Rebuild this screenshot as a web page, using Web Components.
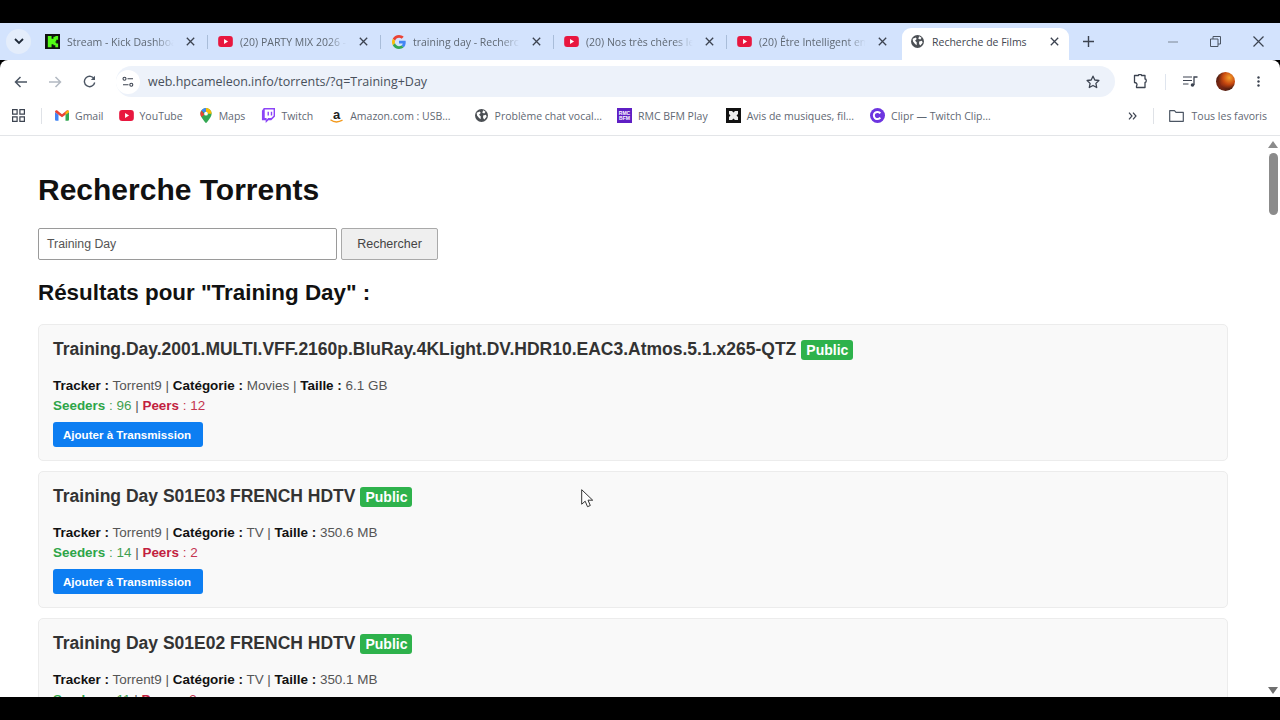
<!DOCTYPE html>
<html lang="fr">
<head>
<meta charset="utf-8">
<title>Recherche de Films</title>
<style>
  html, body { margin: 0; padding: 0; background: #000; overflow: hidden; }
  body { width: 1280px; height: 720px; display: flex; flex-direction: column; }
</style>
</head>
<body>
<browser-window>
  <tab-strip>
    <browser-tab icon="kick" fade>Stream - Kick Dashboard</browser-tab>
    <browser-tab icon="yt" fade>(20) PARTY MIX 2026 - Musique</browser-tab>
    <browser-tab icon="google" fade>training day - Recherche</browser-tab>
    <browser-tab icon="yt" fade>(20) Nos très chères lectures</browser-tab>
    <browser-tab icon="yt" fade>(20) Être Intelligent en</browser-tab>
    <browser-tab icon="globe" active>Recherche de Films</browser-tab>
  </tab-strip>
  <nav-bar url="web.hpcameleon.info/torrents/?q=Training+Day"></nav-bar>
  <bookmark-bar>
    <bookmark-item icon="gmail">Gmail</bookmark-item>
    <bookmark-item icon="yt">YouTube</bookmark-item>
    <bookmark-item icon="maps" style="margin-left:1px">Maps</bookmark-item>
    <bookmark-item icon="twitch" style="margin-left:1px">Twitch</bookmark-item>
    <bookmark-item icon="amazon" style="margin-left:1px">Amazon.com : USB...</bookmark-item>
    <bookmark-item icon="globe" style="margin-left:9px">Problème chat vocal...</bookmark-item>
    <bookmark-item icon="rmc">RMC BFM Play</bookmark-item>
    <bookmark-item icon="avis" style="margin-left:3px">Avis de musiques, fil...</bookmark-item>
    <bookmark-item icon="clipr" style="margin-left:1px">Clipr — Twitch Clip...</bookmark-item>
  </bookmark-bar>
  <torrent-page query="Training Day">
    <torrent-card name="Training.Day.2001.MULTI.VFF.2160p.BluRay.4KLight.DV.HDR10.EAC3.Atmos.5.1.x265-QTZ" category="Movies" size="6.1 GB" seeders="96" peers="12"></torrent-card>
    <torrent-card name="Training Day S01E03 FRENCH HDTV" category="TV" size="350.6 MB" seeders="14" peers="2"></torrent-card>
    <torrent-card name="Training Day S01E02 FRENCH HDTV" category="TV" size="350.1 MB" seeders="11" peers="3"></torrent-card>
  </torrent-page>
</browser-window>

<script>
const ICONS = {
  kick: `<svg viewBox="0 0 16 16" width="15" height="15"><rect width="16" height="16" fill="#111"/><path d="M3 2h4v3h2V3h2V2h3v4h-2v2h-1v1h1v1h2v4h-3v-2H9v-1H7v3H3z" fill="#53fc18"/></svg>`,
  yt: `<svg viewBox="0 0 16 12" width="15" height="11"><rect width="16" height="12" rx="3.2" fill="#e8173f"/><path d="M6.4 3.4 10.8 6 6.4 8.6z" fill="#fff"/></svg>`,
  google: `<svg viewBox="0 0 48 48" width="14" height="14"><path fill="#ea4335" d="M24 9.500c3.500 0 6.700 1.200 9.200 3.600l6.900-6.900C35.900 2.400 30.400 0 24 0 14.600 0 6.500 5.400 2.600 13.200l8 6.200C12.500 13.600 17.800 9.500 24 9.500z"/><path fill="#4285f4" d="M47 24.500c0-1.600-.1-3.100-.4-4.500H24v9h12.900c-.6 3-2.200 5.500-4.700 7.200l7.700 6C44.400 38 47 31.800 47 24.500z"/><path fill="#fbbc05" d="M10.600 28.600c-.5-1.400-.8-3-.8-4.600s.3-3.200.8-4.600l-8-6.200C.9 16.500 0 20.100 0 24s.9 7.500 2.600 10.800z"/><path fill="#34a853" d="M24 48c6.500 0 11.900-2.100 15.900-5.800l-7.700-6c-2.200 1.500-4.900 2.300-8.200 2.300-6.200 0-11.500-4.200-13.400-9.800l-8 6.200C6.500 42.600 14.600 48 24 48z"/></svg>`,
  globe: `<svg viewBox="0 0 16 16" width="13" height="13"><circle cx="8" cy="8" r="8" fill="#4b4f54"/><path d="M2 4.500 6 3l1 2-2 2 2 2v3.500L5 11 2.500 8zM10 1.500l3 2-1.500 2L9 4.500zM10 8l3.500-1 .8 2.500-2.800 3.500L10 11z" fill="#fff"/></svg>`,
  gmail: `<svg viewBox="0 0 16 12" width="14" height="11"><path d="M0 2v8.500C0 11.300.7 12 1.500 12H4V5z" fill="#4285f4"/><path d="M12 5v7h2.500c.8 0 1.500-.7 1.500-1.500V2z" fill="#34a853"/><path d="M0 2c0-2 2-2.500 3-1.500L8 4.500 13 .5c1-1 3-.5 3 1.500l-4 3-4 3-4-3z" fill="#ea4335"/><path d="M12 5 16 2c0-1-.5-1.700-1.200-1.900L12 2.200z" fill="#fbbc05"/></svg>`,
  maps: `<svg viewBox="0 0 12 16" width="12" height="15"><path d="M6 0a6 6 0 0 1 6 6c0 4-6 10-6 10S0 10 0 6a6 6 0 0 1 6-6z" fill="#34a853"/><path d="M6 0a6 6 0 0 1 6 6L8 6a2 2 0 0 0-2-2z" fill="#fbbc05"/><path d="M6 0a6 6 0 0 0-5 2.700L4.500 5 6 4z" fill="#4285f4"/><path d="M1 2.700A6 6 0 0 0 0 6c0 1.200.5 2.400 1.200 3.600L4.400 7z" fill="#ea4335"/><circle cx="6" cy="6" r="2" fill="#fff"/></svg>`,
  twitch: `<svg viewBox="0 0 15 16" width="14" height="15"><path d="M3 0h12v9l-4 4H8l-3 3v-3H1V3z" fill="#8c45f7"/><path d="M4 1.500h9.500v6.800l-2.500 2.500H7.700L6 12.500v-1.700H4z" fill="#fff"/><path d="M7 4h1.500v4H7zM10.500 4H12v4h-1.500z" fill="#8c45f7"/></svg>`,
  rmc: `<svg viewBox="0 0 15 15" width="15" height="15"><rect width="15" height="15" fill="#5f1fc4"/><text x="7.500" y="6.600" font-family="Liberation Sans" font-size="5" font-weight="700" fill="#fff" text-anchor="middle">RMC</text><text x="7.500" y="12.200" font-family="Liberation Sans" font-size="5" font-weight="700" fill="#fff" text-anchor="middle">BFM</text></svg>`,
  avis: `<svg viewBox="0 0 15 15" width="15" height="15"><rect width="15" height="15" fill="#111"/><path d="M3 3h3l1.500 1.500L9 3h3v3l-1.500 1.500L12 9v3H9L7.500 10.500 6 12H3V9l1.500-1.500L3 6z" fill="#eee"/></svg>`,
  clipr: `<svg viewBox="0 0 15 15" width="15" height="15"><circle cx="7.500" cy="7.500" r="7.500" fill="#6d35e0"/><path d="M10.300 5.300a3.600 3.600 0 1 0 0 4.400" fill="none" stroke="#fff" stroke-width="2"/></svg>`,
  amazon: `<svg viewBox="0 0 15 16" width="15" height="16"><text x="7.500" y="10.500" font-family="Liberation Sans" font-size="13" font-weight="700" fill="#222" text-anchor="middle">a</text><path d="M1.500 11.800c3.500 2.600 8 2.600 12 .4" fill="none" stroke="#f39a1e" stroke-width="1.400"/></svg>`
};

class BrowserWindow extends HTMLElement {
  constructor() {
    super();
    this.attachShadow({ mode: "open" }).innerHTML = `
      <style>
        :host { display: flex; flex-direction: column; width: 1280px; height: 720px; padding: 23px 0; box-sizing: border-box; background: #000; }
      </style>
      <slot></slot>`;
  }
}

class TabStrip extends HTMLElement {
  constructor() {
    super();
    this.attachShadow({ mode: "open" }).innerHTML = `
      <style>
        :host { display: flex; align-items: flex-end; height: 37px; background: #d3e3fd; flex: none; font-family: "Open Sans", "Noto Sans", sans-serif; }
        .menu { width: 25px; height: 25px; margin: 0 4px 6px 6px; border-radius: 50%; background: #e4edfb; display: flex; align-items: center; justify-content: center; flex: none; }
        .tabs { display: flex; align-items: flex-end; flex: none; }
        .add { width: 38px; height: 37px; display: flex; align-items: center; justify-content: center; }
        .controls { margin-left: auto; display: flex; height: 37px; align-items: center; }
        .controls div { width: 43px; height: 37px; display: flex; align-items: center; justify-content: center; }
      </style>
      <div class="menu"><svg width="10" height="7" viewBox="0 0 10 7"><path d="M1 1l4 4 4-4" fill="none" stroke="#1f2937" stroke-width="1.800"/></svg></div>
      <div class="tabs"><slot></slot></div>
      <div class="add"><svg width="11" height="11" viewBox="0 0 11 11"><path d="M5.500 0v11M0 5.500h11" stroke="#3c4350" stroke-width="1.400"/></svg></div>
      <div class="controls">
        <div><svg width="10" height="2" viewBox="0 0 10 2"><path d="M0 1h10" stroke="#7d8794" stroke-width="1"/></svg></div>
        <div><svg width="11" height="11" viewBox="0 0 11 11"><path d="M.5 3h7.500v7.500H.5zM3 3V.5h7.500V8H8" fill="none" stroke="#4b5563" stroke-width="1"/></svg></div>
        <div><svg width="11" height="11" viewBox="0 0 11 11"><path d="M.5.500l10 10M10.500.500l-10 10" stroke="#3c4350" stroke-width="1.200"/></svg></div>
      </div>`;
  }
}

class BrowserTab extends HTMLElement {
  constructor() {
    super();
    const active = this.hasAttribute("active");
    this.attachShadow({ mode: "open" }).innerHTML = `
      <style>
        :host { display: flex; align-items: center; box-sizing: border-box; width: ${active ? 167 : 173}px; height: 32px; margin-left: ${active ? 2 : 0}px; position: relative; font-size: 10.500px; color: ${active ? "#3f4650" : "#5f6873"}; background: ${active ? "#fff" : "transparent"}; border-radius: ${active ? "9px 9px 0 0" : "0"}; padding: 0 ${active ? 10 : 13}px 5px ${active ? 8 : 10}px; }
        :host(:not([active]))::after { content: ""; position: absolute; right: 0; top: 7px; height: 14px; width: 1px; background: #a9bdd9; }
        :host(:nth-of-type(5))::after { display: none; }
        .ico { width: 15px; display: flex; align-items: center; justify-content: center; flex: none; margin-right: 7px; }
        .label { flex: 1; overflow: hidden; white-space: nowrap; min-width: 0; }
        :host([fade]) .label { -webkit-mask-image: linear-gradient(90deg, #000 80%, transparent 98%); mask-image: linear-gradient(90deg, #000 80%, transparent 98%); }
        .close { flex: none; margin-left: 10px; width: 9px; height: 9px; display: flex; }
      </style>
      <span class="ico">${ICONS[this.getAttribute("icon")]}</span>
      <span class="label"><slot></slot></span>
      <span class="close"><svg width="9" height="9" viewBox="0 0 9 9"><path d="M.8.800l7.400 7.400M8.200.800 .8 8.200" stroke="#3c4350" stroke-width="1.300"/></svg></span>`;
  }
}

class NavBar extends HTMLElement {
  constructor() {
    super();
    this.attachShadow({ mode: "open" }).innerHTML = `
      <style>
        :host { display: flex; align-items: center; box-sizing: border-box; height: 40px; padding-top: 3px; flex: none; background: #fff; border-radius: 8px 8px 0 0; font-family: "Open Sans", "Noto Sans", sans-serif; }
        .btn { width: 34px; display: flex; justify-content: center; flex: none; }
        .back { margin-left: 4px; }
        .pill { flex: none; width: 999px; height: 31px; margin-left: 10px; background: #edf2fa; border-radius: 16px; display: flex; align-items: center; }
        .tune { width: 24px; height: 24px; border-radius: 50%; background: #fff; display: flex; align-items: center; justify-content: center; }
        .url { margin-left: 8px; font-size: 12.500px; color: #48505b; flex: 1; }
        .star { margin-right: 15px; display: flex; }
        .right { display: flex; align-items: center; margin-left: 18px; }
        .sep { width: 1px; height: 16px; background: #dfe5ee; margin: 0 17px 0 16px; }
        .avatar { width: 19px; height: 19px; border-radius: 50%; margin-left: 18px; background: radial-gradient(circle at 70% 30%, #f4a02c 0, #c8480f 35%, transparent 60%), radial-gradient(circle at 30% 65%, #8d2a12 0, #2e1712 75%); }
        .dots { margin-left: 22px; display: flex; }
      </style>
      <div class="btn back"><svg width="14" height="12" viewBox="0 0 14 12"><path d="M13 6H2M6.500 1 1.500 6l5 5" fill="none" stroke="#4b5563" stroke-width="1.500"/></svg></div>
      <div class="btn"><svg width="14" height="12" viewBox="0 0 14 12"><path d="M1 6h11M7.500 1l5 5-5 5" fill="none" stroke="#b3b9c2" stroke-width="1.500"/></svg></div>
      <div class="btn"><svg width="13" height="13" viewBox="0 0 13 13"><path d="M11.300 4.200A5.200 5.200 0 1 0 11.700 7.500" fill="none" stroke="#4b5563" stroke-width="1.400"/><path d="M12 .8v4.200H7.800z" fill="#4b5563"/></svg></div>
      <div class="pill">
        <div class="tune"><svg width="12" height="12" viewBox="0 0 12 12"><circle cx="2.500" cy="2.800" r="1.500" fill="none" stroke="#3c4350" stroke-width="1.100"/><path d="M5.500 2.800H11M1 8.800h5.500" stroke="#3c4350" stroke-width="1.100"/><circle cx="9.300" cy="8.800" r="1.500" fill="none" stroke="#3c4350" stroke-width="1.100"/></svg></div>
        <div class="url">${this.getAttribute("url")}</div>
        <div class="star"><svg width="14" height="14" viewBox="0 0 14 14"><path d="M7 1.200l1.800 3.800 4.100.5-3 2.900.8 4.100L7 10.500l-3.700 2 .8-4.100-3-2.900 4.100-.5z" fill="none" stroke="#3c4350" stroke-width="1.300" stroke-linejoin="round"/></svg></div>
      </div>
      <div class="right">
        <svg width="16" height="15" viewBox="0 0 16 15"><path d="M1.500 1.500h4c0-1.500 3-1.500 3 0h3.500v3.500c1.700 0 1.700 3.500 0 3.500v5H3.500v-1.500c1.200-1.800 0-3.500-2-3.500z" fill="none" stroke="#3c4350" stroke-width="1.300" stroke-linejoin="round"/></svg>
        <div class="sep"></div>
        <svg width="15" height="11" viewBox="0 0 15 11"><path d="M0 1h9M0 4.500h9M0 8h5.500" stroke="#3c4350" stroke-width="1.100"/><path d="M11 9V1h3.500" fill="none" stroke="#3c4350" stroke-width="1.300"/><circle cx="9.500" cy="9" r="1.800" fill="#3c4350"/></svg>
        <div class="avatar"></div>
        <div class="dots"><svg width="3" height="11" viewBox="0 0 3 11"><circle cx="1.500" cy="1.500" r="1.200" fill="#3c4350"/><circle cx="1.500" cy="5.500" r="1.200" fill="#3c4350"/><circle cx="1.500" cy="9.500" r="1.200" fill="#3c4350"/></svg></div>
      </div>`;
  }
}

class BookmarkBar extends HTMLElement {
  constructor() {
    super();
    this.attachShadow({ mode: "open" }).innerHTML = `
      <style>
        :host { display: flex; align-items: center; height: 36px; padding-bottom: 4px; flex: none; box-sizing: border-box; background: #fff; border-bottom: 1px solid #e3e5e8; font-family: "Open Sans", "Noto Sans", sans-serif; font-size: 10.500px; color: #5f6873; }
        .apps { margin-left: 12px; display: flex; }
        .sep { width: 1px; height: 16px; background: #dfe2e7; }
        .first { margin: 0 13px 0 16px; }
        .items { display: flex; align-items: center; gap: 15px; }
        .more { margin-left: auto; display: flex; align-items: center; }
        .chev { margin-right: 16px; display: flex; }
        .fold { margin: 0 8px 0 15px; display: flex; }
        .all { margin-right: 13px; }
      </style>
      <div class="apps"><svg width="13" height="13" viewBox="0 0 13 13"><path d="M.6.600h4.500v4.500H.6zM7.900.600h4.500v4.500H7.900zM.6 7.900h4.500v4.500H.6zM7.900 7.900h4.500v4.500H7.900z" fill="none" stroke="#3c4350" stroke-width="1.200"/></svg></div>
      <div class="sep first"></div>
      <div class="items"><slot></slot></div>
      <div class="more">
        <div class="chev"><svg width="9" height="8" viewBox="0 0 9 8"><path d="M1 .6 4 4 1 7.400M5 .6 8 4 5 7.400" fill="none" stroke="#3c4350" stroke-width="1.200"/></svg></div>
        <div class="sep"></div>
        <div class="fold"><svg width="15" height="12" viewBox="0 0 15 12"><path d="M.7.700h4.800l1.500 1.600h7.300v9H.7z" fill="none" stroke="#4b5563" stroke-width="1.200" stroke-linejoin="round"/></svg></div>
        <div class="all">Tous les favoris</div>
      </div>`;
  }
}

class BookmarkItem extends HTMLElement {
  constructor() {
    super();
    this.attachShadow({ mode: "open" }).innerHTML = `
      <style>
        :host { display: flex; align-items: center; gap: 6px; white-space: nowrap; }
        .ico { display: flex; align-items: center; justify-content: center; min-width: 14px; }
      </style>
      <span class="ico">${ICONS[this.getAttribute("icon")]}</span><slot></slot>`;
  }
}

class TorrentPage extends HTMLElement {
  constructor() {
    super();
    const query = this.getAttribute("query");
    this.attachShadow({ mode: "open" }).innerHTML = `
      <style>
        :host { display: block; position: relative; flex: 1; min-height: 0; overflow: hidden; background: #fff; font-family: "Liberation Sans", Arial, sans-serif; color: #111; }
        .body { padding: 36px 52px 0 38px; }
        h1 { margin: 0; font-size: 30px; line-height: 35px; }
        form { display: flex; gap: 4px; margin-top: 21px; }
        .input { box-sizing: border-box; width: 299px; height: 32px; border: 1px solid #9a9a9a; border-radius: 2px; padding: 0 8px; display: flex; align-items: center; font-size: 12.300px; color: #555; }
        .submit { box-sizing: border-box; width: 97px; height: 32px; border: 1px solid #a9a9a9; border-radius: 2px; background: #efefef; display: flex; align-items: center; justify-content: center; font-size: 12.500px; color: #444; }
        h2 { margin: 19px 0 17px; font-size: 22.400px; line-height: 28px; }
        .list { display: flex; flex-direction: column; gap: 10px; }
        .scroll { position: absolute; top: 0; right: 0; width: 14px; height: 100%; }
        .thumb { position: absolute; left: 3px; top: 17px; width: 9px; height: 62px; border-radius: 5px; background: #8b8b8b; }
        .up, .down { position: absolute; left: 2px; width: 0; height: 0; border-left: 5px solid transparent; border-right: 5px solid transparent; }
        .up { top: 5px; border-bottom: 7px solid #8b8b8b; }
        .down { bottom: 3px; border-top: 7px solid #6f6f6f; }
      </style>
      <div class="body">
        <h1>Recherche Torrents</h1>
        <form><div class="input">${query}</div><div class="submit">Rechercher</div></form>
        <h2>Résultats pour "${query}" :</h2>
        <div class="list"><slot></slot></div>
      </div>
      <div class="scroll"><div class="up"></div><div class="thumb"></div><div class="down"></div></div>
      <svg style="position:absolute;left:581px;top:353px" width="13" height="19" viewBox="0 0 13 19"><path d="M.7.700v14.500l3.500-3 2.300 5.500 2.800-1.200-2.300-5.300h4.700z" fill="#fff" stroke="#333" stroke-width="1"/></svg>`;
  }
}

class TorrentCard extends HTMLElement {
  constructor() {
    super();
    const a = (n) => this.getAttribute(n);
    this.attachShadow({ mode: "open" }).innerHTML = `
      <style>
        :host { display: block; box-sizing: border-box; height: 137px; border: 1px solid #ececec; border-radius: 5px; background: #f9f9f9; padding: 13px 15px 0 14px; font-size: 13.440px; color: #555; }
        .title { display: flex; align-items: center; gap: 5px; height: 22px; font-size: 17.500px; font-weight: 700; color: #333; white-space: nowrap; }
        .badge { background: #2eb24c; color: #fff; font-size: 14px; border-radius: 3px; padding: 0 5px; height: 20px; line-height: 20px; margin-top: 2px; }
        .meta { margin-top: 16px; line-height: 20px; }
        b { color: #111; font-weight: 700; }
        .seed { color: #3f9f50; }
        .seed b { color: #2ea548; }
        .peer { color: #c4354f; }
        .peer b { color: #c21f3f; }
        .add { display: inline-flex; align-items: center; justify-content: center; box-sizing: border-box; width: 150px; height: 25px; padding-right: 2px; margin-top: 6px; border-radius: 3px; background: #0d7ef2; color: #fff; font-size: 11.600px; font-weight: 700; }
      </style>
      <div class="title"><span>${a("name")}</span><span class="badge">Public</span></div>
      <div class="meta">
        <div><b>Tracker :</b> Torrent9 | <b>Catégorie :</b> ${a("category")} | <b>Taille :</b> ${a("size")}</div>
        <div><span class="seed"><b>Seeders</b> : ${a("seeders")}</span> | <span class="peer"><b>Peers</b> : ${a("peers")}</span></div>
      </div>
      <div class="add">Ajouter à Transmission</div>`;
  }
}

customElements.define("browser-window", BrowserWindow);
customElements.define("tab-strip", TabStrip);
customElements.define("browser-tab", BrowserTab);
customElements.define("nav-bar", NavBar);
customElements.define("bookmark-bar", BookmarkBar);
customElements.define("bookmark-item", BookmarkItem);
customElements.define("torrent-page", TorrentPage);
customElements.define("torrent-card", TorrentCard);
</script>
</body>
</html>
